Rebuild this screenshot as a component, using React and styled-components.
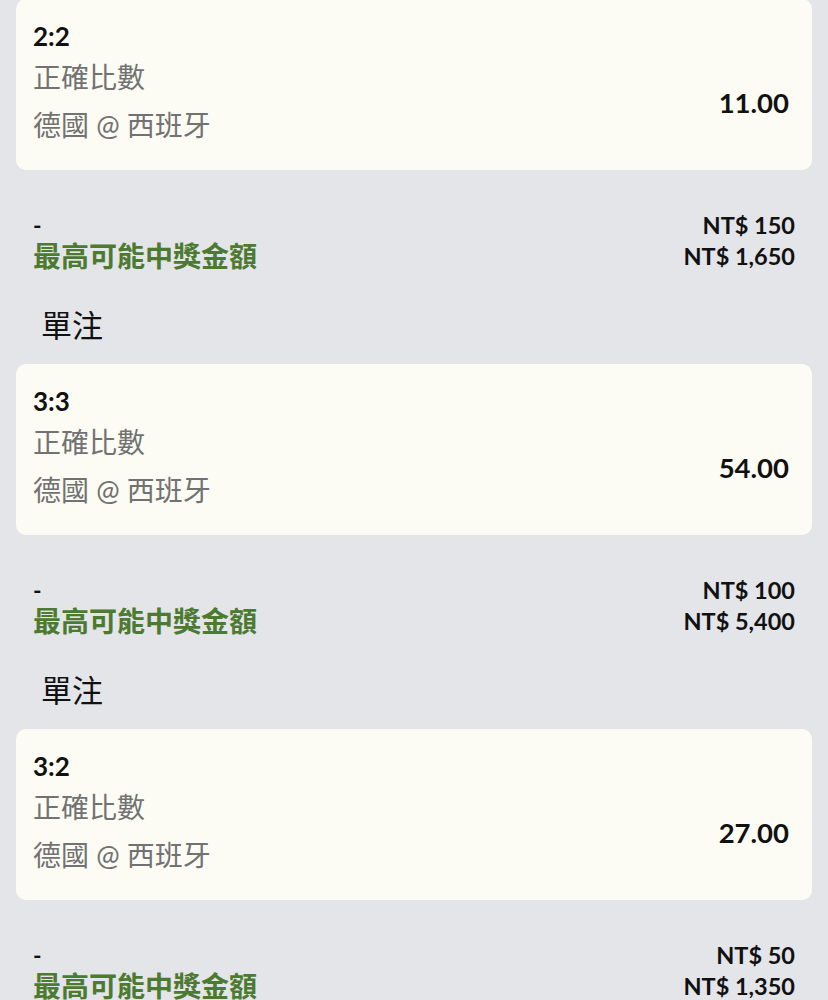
import styled, { createGlobalStyle } from "styled-components";

const bets = [
  { score: "2:2", odds: "11.00", stake: "NT$ 150", payout: "NT$ 1,650" },
  { score: "3:3", odds: "54.00", stake: "NT$ 100", payout: "NT$ 5,400" },
  { score: "3:2", odds: "27.00", stake: "NT$ 50", payout: "NT$ 1,350" },
];

export default function App() {
  return (
    <>
      <GlobalStyle />
      <StyledList>
        {bets.map((bet, index) => (
          <StyledBet key={bet.score}>
            {index > 0 && <StyledHeading>單注</StyledHeading>}
            <StyledCard>
              <StyledInfo>
                <StyledScore>{bet.score}</StyledScore>
                <StyledMarket>正確比數</StyledMarket>
                <StyledTeams>德國 @ 西班牙</StyledTeams>
              </StyledInfo>
              <StyledOdds>{bet.odds}</StyledOdds>
            </StyledCard>
            <StyledSummary>
              <StyledDash>-</StyledDash>
              <StyledAmount>{bet.stake}</StyledAmount>
              <StyledWinLabel>最高可能中獎金額</StyledWinLabel>
              <StyledAmount>{bet.payout}</StyledAmount>
            </StyledSummary>
          </StyledBet>
        ))}
      </StyledList>
    </>
  );
}

const GlobalStyle = createGlobalStyle`
  body {
    margin: 0;
    background: #e4e5e9;
    font-family: "Lato", "Noto Sans CJK TC", sans-serif;
    color: #111;
  }
`;

const StyledList = styled.main`
  display: flex;
  flex-direction: column;
  margin-top: -1px;
`;

const StyledBet = styled.section`
  display: flex;
  flex-direction: column;
`;

const StyledHeading = styled.h2`
  margin: 33px 0 19px;
  padding-left: 41px;
  font-size: 31px;
  font-weight: 400;
  line-height: 40px;
  color: #111;
`;

const StyledCard = styled.div`
  display: flex;
  justify-content: space-between;
  align-items: flex-end;
  margin: 0 16px;
  padding: 22px 23px 27px 17px;
  background: #fcfcf4;
  border-radius: 10px;
`;

const StyledInfo = styled.div`
  display: flex;
  flex-direction: column;
`;

const StyledScore = styled.span`
  font-size: 26px;
  font-weight: 700;
  line-height: 30px;
  color: #111;
`;

const StyledMarket = styled.span`
  margin-top: 8px;
  font-size: 28px;
  line-height: 36px;
  color: #727272;
`;

const StyledTeams = styled(StyledMarket)`
  margin-top: 12px;
`;

const StyledOdds = styled.span`
  margin-bottom: 22px;
  font-size: 27.5px;
  font-weight: 700;
  line-height: 36px;
  color: #111;
`;

const StyledSummary = styled.div`
  display: grid;
  grid-template-columns: 1fr auto;
  align-items: center;
  margin-top: 40px;
  padding: 0 33px;
  line-height: 31px;
`;

const StyledDash = styled.span`
  font-size: 23px;
  font-weight: 700;
`;

const StyledWinLabel = styled.span`
  font-size: 28px;
  font-weight: 700;
  color: #4d7a31;
`;

const StyledAmount = styled.span`
  font-size: 23.5px;
  font-weight: 700;
  text-align: right;
`;
